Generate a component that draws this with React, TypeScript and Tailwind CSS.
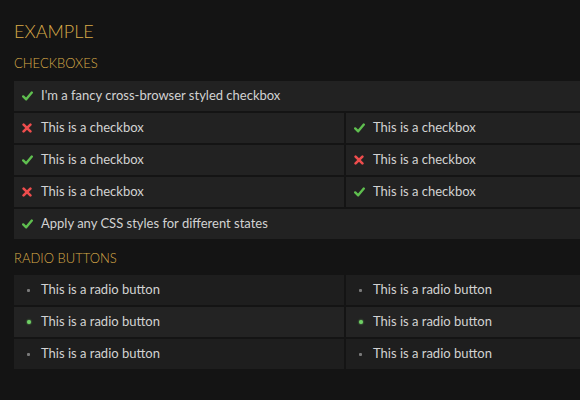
import React from "react";

type Cell = { on: boolean; label: string };

function CheckIcon({ on }: { on: boolean }) {
  if (on) {
    return (
      <svg width="11" height="10" viewBox="0 0 11 10" className="shrink-0">
        <path d="M1.2 5.4 L4.2 8.3 L9.8 1.6" fill="none" stroke="#5fbf4f" strokeWidth="2.4" strokeLinecap="round" strokeLinejoin="round" />
      </svg>
    );
  }
  return (
    <svg width="10" height="10" viewBox="0 0 10 10" className="shrink-0">
      <path d="M1.6 1.6 L8.4 8.4 M8.4 1.6 L1.6 8.4" fill="none" stroke="#ee4d4d" strokeWidth="2.6" strokeLinecap="round" />
    </svg>
  );
}

function CheckRow({ on, label }: Cell) {
  return (
    <div className="flex h-[30px] items-center bg-[#222222] pl-[8px]">
      <div className="flex w-[19px] items-center">
        <CheckIcon on={on} />
      </div>
      <span className="text-[13px] text-[#d2d2d2]">{label}</span>
    </div>
  );
}

function RadioRow({ on, label, shade }: Cell & { shade: string }) {
  return (
    <div className={`flex h-[30px] items-center pl-[13px] ${shade}`}>
      <div className="flex w-[14px] items-center">
        {on ? (
          <span className="block h-[4px] w-[4px] rounded-full bg-[#6fd065] shadow-[0_0_2px_#6fd065]" />
        ) : (
          <span className="block h-[3px] w-[3px] rounded-[1px] bg-[#7a7a7a]" />
        )}
      </div>
      <span className="text-[13px] text-[#d2d2d2]">{label}</span>
    </div>
  );
}

export default function App() {
  const cb = "This is a checkbox";
  const rb = "This is a radio button";

  const pairs: [Cell, Cell][] = [
    [{ on: false, label: cb }, { on: true, label: cb }],
    [{ on: true, label: cb }, { on: false, label: cb }],
    [{ on: false, label: cb }, { on: true, label: cb }],
  ];

  const radioShades = ["bg-[#1e1e1e]", "bg-[#232323]", "bg-[#1e1e1e]"];

  return (
    <div
      className="h-[400px] w-[580px] overflow-hidden bg-[#141414] pl-[14px]"
      style={{ fontFamily: "Lato, 'Open Sans', sans-serif" }}
    >
      <h1 className="pt-[20px] text-[18px] font-light leading-[22px] text-[#d9aa48]">
        EXAMPLE
      </h1>
      <h2 className="mt-[13px] text-[13px] font-light leading-[16px] text-[#d9aa48]">CHECKBOXES</h2>

      <div className="mt-[10px] grid w-[662px] grid-cols-2 gap-[2px]">
        <div className="col-span-2">
          <CheckRow on={true} label="I'm a fancy cross-browser styled checkbox" />
        </div>
        {pairs.map(([a, b], i) => (
          <React.Fragment key={i}>
            <CheckRow {...a} />
            <CheckRow {...b} />
          </React.Fragment>
        ))}
        <div className="col-span-2">
          <CheckRow on={true} label="Apply any CSS styles for different states" />
        </div>
      </div>

      <h2 className="mt-[11px] text-[13px] font-light leading-[16px] text-[#d9aa48]">RADIO BUTTONS</h2>

      <div className="mt-[9px] grid w-[662px] grid-cols-2 gap-[2px]">
        {radioShades.map((shade, i) => (
          <React.Fragment key={i}>
            <RadioRow on={i === 1} label={rb} shade={shade} />
            <RadioRow on={i === 1} label={rb} shade={shade} />
          </React.Fragment>
        ))}
      </div>
    </div>
  );
}
